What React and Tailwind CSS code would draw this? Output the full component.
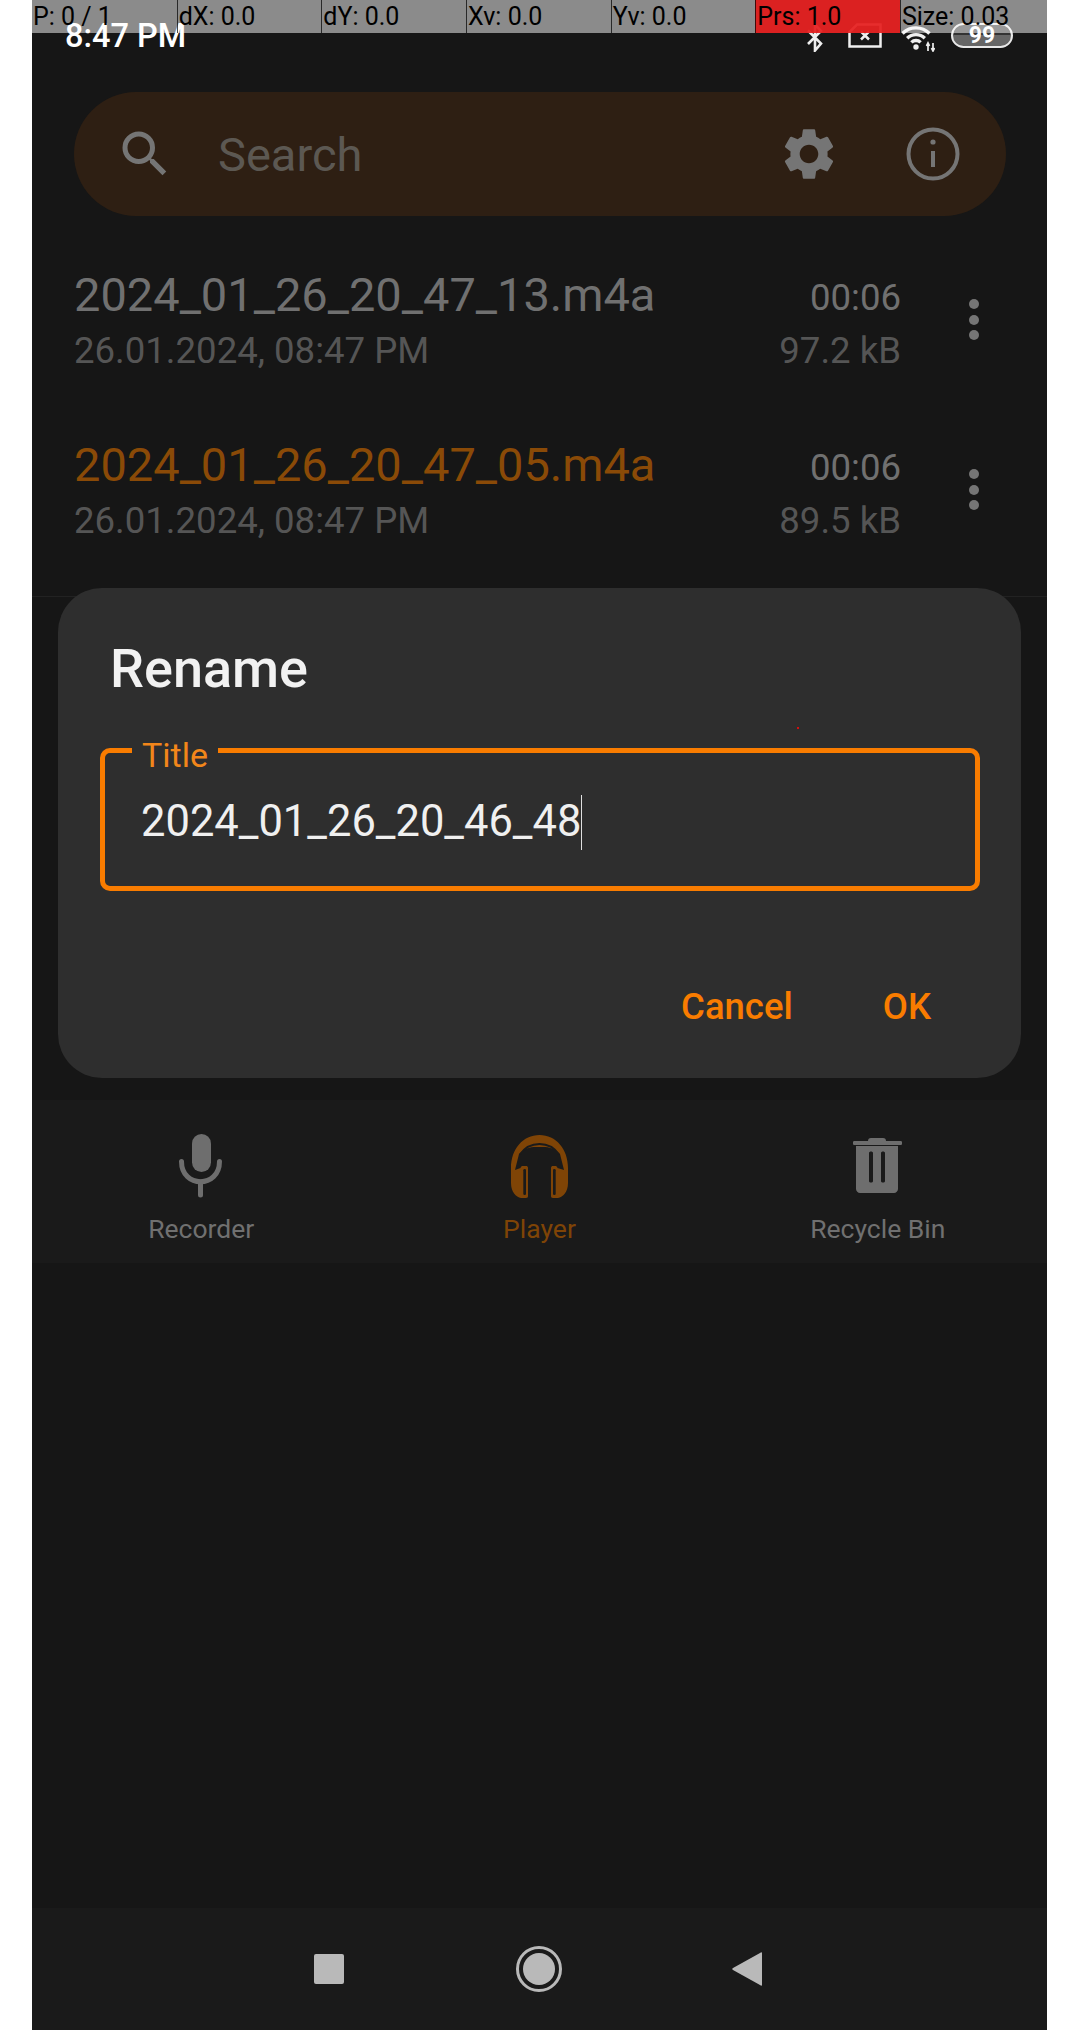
const roboto = { fontFamily: 'Roboto, sans-serif' }

const recordings = [
  { title: '2024_01_26_20_47_13.m4a', date: '26.01.2024, 08:47 PM', length: '00:06', size: '97.2 kB', active: false },
  { title: '2024_01_26_20_47_05.m4a', date: '26.01.2024, 08:47 PM', length: '00:06', size: '89.5 kB', active: true },
]

const pointerCells = [
  { label: 'P: 0 / 1' },
  { label: 'dX: 0.0' },
  { label: 'dY: 0.0' },
  { label: 'Xv: 0.0' },
  { label: 'Yv: 0.0' },
  { label: 'Prs: 1.0', hot: true },
  { label: 'Size: 0.03' },
]

function PointerBar() {
  return (
    <div className="absolute left-0 top-0 flex h-[33px] w-full text-[25px] leading-[33px] text-black">
      {pointerCells.map((cell, i) => (
        <div
          key={i}
          className={`h-full overflow-hidden whitespace-nowrap pl-[1px] ${i === 6 ? 'flex-1' : 'w-[144.67px]'} ${i > 0 ? 'border-l border-black/70' : ''} ${cell.hot ? 'bg-[#e62222]/95' : 'bg-white/50'}`}
        >
          {cell.label}
        </div>
      ))}
    </div>
  )
}

function StatusIcons() {
  return (
    <div className="absolute left-[775px] top-[23px] flex items-start">
      {/* bluetooth */}
      <svg className="h-[29px] w-[16px]" viewBox="0 0 16 29" fill="none" stroke="#efefef" strokeWidth="2.6">
        <path d="M1 7.500l13 13-6 7V1.500l6 6.500L1 21" />
      </svg>
      {/* sim */}
      <svg className="ml-[25px] h-[25px] w-[34px]" viewBox="0 0 34 25" fill="none" stroke="#efefef" strokeWidth="2.5">
        <path d="M1.500 23.500V9L9 1.500h23.500v22z" />
        <path d="M13 8.500l8 8M21 8.500l-8 8" />
      </svg>
      {/* wifi */}
      <svg className="ml-[20px] mt-[2px] h-[27px] w-[33px]" viewBox="0 0 33 27" fill="none" stroke="#efefef" strokeWidth="3.4">
        <path d="M.5 8.500A19 19 0 0 1 27.500 8.500" />
        <path d="M5.200 13.200A12.500 12.500 0 0 1 22.800 13.200" />
        <path d="M9.400 17.400A6.500 6.500 0 0 1 18.600 17.400" />
        <circle cx="14" cy="22" r="2.700" fill="#efefef" stroke="none" />
        <path d="M26 18v8M31 18v8M24.500 21l1.500-3 1.500 3M29.500 23l1.500 3 1.500-3" strokeWidth="1.700" />
      </svg>
      {/* battery */}
      <div className="relative ml-[16px] h-[25px] w-[62px] overflow-hidden rounded-full border-[2.5px] border-[#e8e8e8] bg-gradient-to-b from-[#333] from-50% to-[#666] to-50%">
        <div className="absolute inset-0 flex items-center justify-center text-[23px] font-bold leading-none text-white">99</div>
      </div>
    </div>
  )
}

function SearchBar() {
  return (
    <div className="mx-[42px] mt-[92px] flex h-[124px] w-[932px] items-center rounded-full bg-[#2e1f13]">
      <svg className="ml-[41px] h-[60px] w-[60px]" viewBox="0 0 24 24" fill="#757575">
        <path d="M15.5 14h-.79l-.28-.27A6.471 6.471 0 0 0 16 9.5 6.5 6.5 0 1 0 9.5 16c1.61 0 3.09-.59 4.23-1.57l.27.28v.79l5 4.99L20.49 19l-4.99-5zm-6 0C7.01 14 5 11.99 5 9.5S7.01 5 9.5 5 14 7.01 14 9.5 11.99 14 9.5 14z" />
      </svg>
      <span className="ml-[43px] mt-[2px] flex-1 text-[47px] text-[#5c5852]">Search</span>
      <svg className="h-[62px] w-[62px]" viewBox="0 0 24 24" fill="#757575">
        <path d="M19.14 12.94c.04-.3.06-.61.06-.94 0-.32-.02-.64-.07-.94l2.03-1.58c.18-.14.23-.41.12-.61l-1.92-3.32c-.12-.22-.37-.29-.59-.22l-2.39.96c-.5-.38-1.03-.7-1.62-.94l-.36-2.54c-.04-.24-.24-.41-.48-.41h-3.84c-.24 0-.43.17-.47.41l-.36 2.54c-.59.24-1.13.57-1.62.94l-2.39-.96c-.22-.08-.47 0-.59.22L2.74 8.87c-.12.21-.08.47.12.61l2.03 1.58c-.05.3-.09.63-.09.94s.02.64.07.94l-2.03 1.58c-.18.14-.23.41-.12.61l1.92 3.32c.12.22.37.29.59.22l2.39-.96c.5.38 1.03.7 1.62.94l.36 2.54c.05.24.24.41.48.41h3.84c.24 0 .44-.17.47-.41l.36-2.54c.59-.24 1.13-.56 1.62-.94l2.39.96c.22.08.47 0 .59-.22l1.92-3.32c.12-.22.07-.47-.12-.61l-2.01-1.58zM12 15.6c-1.98 0-3.6-1.62-3.6-3.6s1.62-3.6 3.6-3.6 3.6 1.62 3.6 3.6-1.62 3.6-3.6 3.6z" />
      </svg>
      <svg className="ml-[66px] mr-[46px] h-[54px] w-[54px]" viewBox="0 0 54 54" fill="none" stroke="#757575" strokeWidth="4">
        <circle cx="27" cy="27" r="24.5" />
        <path d="M27 24v16" />
        <circle cx="27" cy="15" r="2.6" fill="#757575" stroke="none" />
      </svg>
    </div>
  )
}

function Row({ item }) {
  return (
    <div className="flex h-[170px] items-start pl-[42px]">
      <div className="w-[600px] flex-none">
        <p className={`whitespace-nowrap text-[47px] leading-[52px] ${item.active ? 'text-[#8a4a07]' : 'text-[#707070]'}`}>{item.title}</p>
        <p className="mt-[7px] whitespace-nowrap text-[36.6px] leading-[46px] text-[#555]">{item.date}</p>
      </div>
      <div className="w-[227px] text-right text-[36.6px]">
        <p className="pt-[6px] leading-[46px] text-[#707070]">{item.length}</p>
        <p className="mt-[7px] leading-[46px] text-[#555]">{item.size}</p>
      </div>
      <div className="ml-[68px] mt-[30px] flex flex-col gap-[5.5px]">
        <span className="h-[10px] w-[10px] rounded-full bg-[#757575]" />
        <span className="h-[10px] w-[10px] rounded-full bg-[#757575]" />
        <span className="h-[10px] w-[10px] rounded-full bg-[#757575]" />
      </div>
    </div>
  )
}

function MicIcon() {
  return (
    <svg className="h-[64px] w-[46px]" viewBox="18 9 46 64" fill="none">
      <rect x="32" y="9" width="19" height="38" rx="9.500" fill="#6e6e6e" />
      <path d="M21.500 36.500c0 27 38 27 38 0" stroke="#6e6e6e" strokeWidth="5" strokeLinecap="round" />
      <path d="M40.500 57v13" stroke="#6e6e6e" strokeWidth="5" strokeLinecap="round" />
    </svg>
  )
}

function HeadphonesIcon() {
  return (
    <svg className="h-[63px] w-[57px]" viewBox="0 0 57 63" fill="none">
      <path
        fill="#7f4406"
        d="M28.500 0C12 0 0 14 0 33v15c0 9 5 14 10 15h5c1.500 0 2-1 2-2V33c0-1.500-1-2-2-2h-3c-1.500 0-2 .5-2.500 2L4 35 8 19c6-7 13-7 20.500-7S43 12 49 19l4 16-6.500-2c-.5-1.500-1-2-2.500-2h-2c-1 0-2 .5-2 2v28c0 1 .5 2 2 2h5c5-1 10-6 10-15V33C57 14 45 0 28.500 0z"
      />
      <path d="M9 19.500C14 12 21 9 28.500 9S43 12 48 19.500" stroke="#1a1a1a" strokeWidth="1.800" />
      <rect x="12.300" y="34" width="2.700" height="26" rx="1.300" fill="#1a1a1a" />
      <rect x="42" y="34" width="2.700" height="26" rx="1.300" fill="#1a1a1a" />
    </svg>
  )
}

function BinIcon() {
  return (
    <svg className="h-[64px] w-[49px]" viewBox="13 9 49 64" fill="#6e6e6e">
      <path d="M14 16h14c0-2 1-3 3-3h12c2 0 3 1 3 3h15c1 0 1 1 1 2s0 2-1 2H14c-1 0-1-1-1-2s0-2 1-2z" />
      <path fillRule="evenodd" d="M16 21h42v43c0 2-2 4-4 4H20c-2 0-4-2-4-4zm13 7v28c0 2 4 2 4 0V28c0-2-4-2-4 0zm12 0v28c0 2 4 2 4 0V28c0-2-4-2-4 0z" />
    </svg>
  )
}

function NavItem({ icon, label, color }) {
  return (
    <div className="flex w-[339px] flex-col items-center">
      <div className="flex h-[64px] items-center">{icon}</div>
      <span className={`mt-[13px] text-[26.5px] leading-[36px] ${color}`}>{label}</span>
    </div>
  )
}

function RenameDialog() {
  return (
    <div className="absolute left-[26px] top-[588px] h-[490px] w-[963px] rounded-[44px] bg-[#2e2e2e]">
      <h2 className="ml-[52px] mt-[51px] text-[54px] font-medium leading-[60px] text-[#f2f2f2]">Rename</h2>
      <div className="relative ml-[42px] mt-[49px] h-[143px] w-[880px] rounded-[10px] border-[5px] border-[#f97c00]">
        <span className="absolute left-[27px] top-[-16px] bg-[#2e2e2e] px-[10px] text-[34px] leading-[36px] text-[#f2861a]">Title</span>
        <div className="ml-[36px] mt-[42px] flex h-[54px] items-center">
          <span className="text-[43.5px] text-[#f0f0f0]">2024_01_26_20_46_48</span>
          <span className="h-[55px] w-[1px] bg-[#e0e0e0]" />
        </div>
      </div>
      <div className="mt-[94px] flex justify-end pr-[90px] text-[36.5px] font-medium leading-[44px] text-[#f97c00]">
        <span>Cancel</span>
        <span className="ml-[90px]">OK</span>
      </div>
      {/* stray touch trace */}
      <span className="absolute left-[739px] top-[139px] h-[2px] w-[2px] bg-[#d01010]" />
    </div>
  )
}

export default function App() {
  return (
    <div className="h-[2030px] overflow-hidden bg-white pl-[32px]" style={roboto}>
      <div className="relative flex h-[2030px] w-[1015px] flex-col bg-[#161616]">
        <SearchBar />

        <div className="mt-[53px] h-[327px]">
          {recordings.map((item) => (
            <Row key={item.title} item={item} />
          ))}
        </div>

        <div className="h-[504px] border-t border-[#222]" />

        {/* tab bar */}
        <div className="flex h-[163px] items-start justify-center bg-[#1a1a1a] pt-[34px]">
          <NavItem icon={<MicIcon />} label="Recorder" color="text-[#707070]" />
          <NavItem icon={<HeadphonesIcon />} label="Player" color="text-[#7f4406]" />
          <NavItem icon={<BinIcon />} label="Recycle Bin" color="text-[#707070]" />
        </div>

        <div className="flex-1" />

        {/* system nav */}
        <div className="flex h-[122px] items-center bg-[#1a1a1a] pl-[282px]">
          <span className="h-[30px] w-[30px] rounded-[2px] bg-[#b9b9b9]" />
          <span className="ml-[172px] flex h-[46px] w-[46px] items-center justify-center rounded-full border-[3px] border-[#b9b9b9]">
            <span className="h-[32px] w-[32px] rounded-full bg-[#b9b9b9]" />
          </span>
          <svg className="ml-[170px] h-[34px] w-[30px]" viewBox="0 0 30 34" fill="#b9b9b9">
            <path d="M30 1v32c0 1-1 1-2 0L1 18c-1-.5-1-1.500 0-2L28 1c1-1 2-1 2 0z" />
          </svg>
        </div>

        <RenameDialog />

        <span className="absolute left-[33px] top-[18px] text-[32.5px] font-medium leading-[36px] text-white">8:47 PM</span>
        <StatusIcons />
        <PointerBar />
      </div>
    </div>
  )
}
